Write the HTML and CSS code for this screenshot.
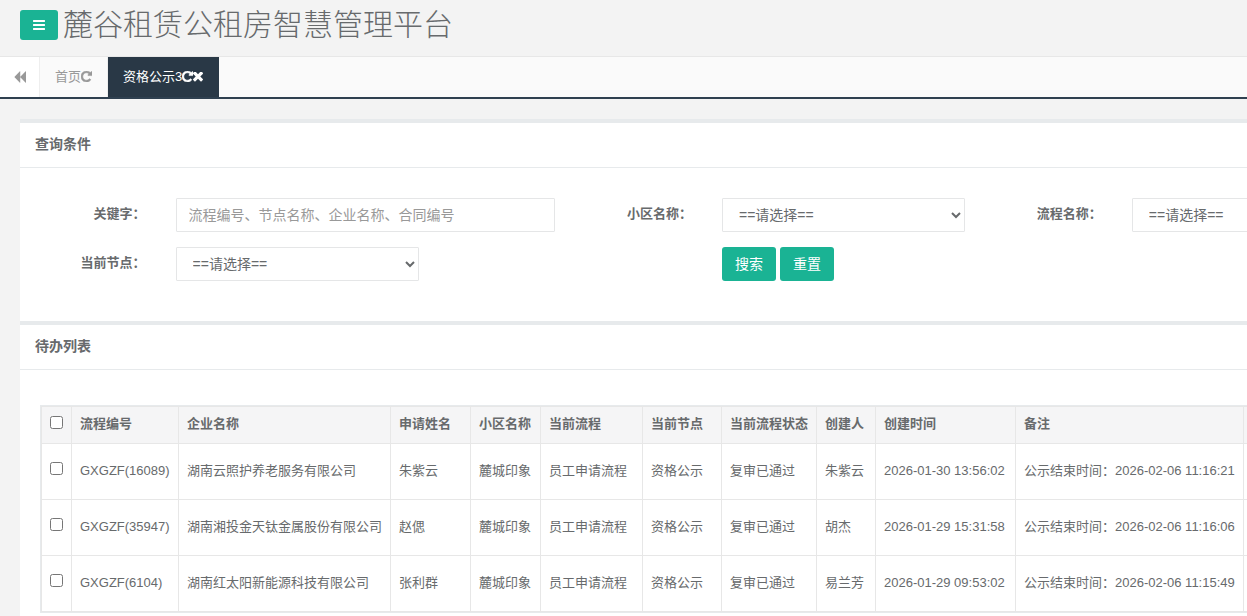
FILE: index.html
```html
<!DOCTYPE html>
<html lang="zh-CN">
	<head>
		<meta charset="utf-8">
		<title>麓谷租赁公租房智慧管理平台</title>
		<link rel="stylesheet" href="styles.css">
	</head>
	<body>
		<header class="navbar">
			<button type="button" class="btn menu-toggle" aria-label="菜单">
				<svg class="icon-bars" viewBox="128 128 1536 1536"><path d="M1664 1344v128q0 26-19 45t-45 19h-1408q-26 0-45-19t-19-45v-128q0-26 19-45t45-19h1408q26 0 45 19t19 45zm0-512v128q0 26-19 45t-45 19h-1408q-26 0-45-19t-19-45v-128q0-26 19-45t45-19h1408q26 0 45 19t19 45zm0-512v128q0 26-19 45t-45 19h-1408q-26 0-45-19t-19-45v-128q0-26 19-45t45-19h1408q26 0 45 19t19 45z"/></svg>
			</button>
			<h1>麓谷租赁公租房智慧管理平台</h1>
		</header>

		<nav class="tabs">
			<button type="button" class="tab-roll" aria-label="向左">
				<svg class="icon-backward" viewBox="128 128 1600 1536"><path d="M1683 141q19-19 32-13t13 32v1472q0 26-13 32t-32-13l-710-710q-9-9-13-19v710q0 26-13 32t-32-13l-710-710q-19-19-19-45t19-45l710-710q19-19 32-13t13 32v710q4-10 13-19z"/></svg>
			</button>
			<a class="tab" href="#home">首页<svg class="icon-repeat" viewBox="128 128 1536 1536"><path d="M1664 256v448q0 26-19 45t-45 19h-448q-42 0-59-40-17-39 14-69l138-138q-148-137-349-137-104 0-198.5 40.5t-163.5 109.5-109.5 163.5-40.5 198.5 40.5 198.5 109.5 163.5 163.5 109.5 198.5 40.5q119 0 225-52t179-147q7-10 23-12 15 0 25 9l137 138q9 8 9.5 20.5t-7.5 22.5q-109 132-264 204.5t-327 72.5q-156 0-298-61t-245-164-164-245-61-298 61-298 164-245 245-164 298-61q147 0 284.5 55.5t244.5 156.5l130-129q29-31 70-14 39 17 39 59z"/></svg></a>
			<a class="tab active" href="#notice">资格公示3<svg class="icon-repeat" viewBox="128 128 1536 1536"><path d="M1664 256v448q0 26-19 45t-45 19h-448q-42 0-59-40-17-39 14-69l138-138q-148-137-349-137-104 0-198.5 40.5t-163.5 109.5-109.5 163.5-40.5 198.5 40.5 198.5 109.5 163.5 163.5 109.5 198.5 40.5q119 0 225-52t179-147q7-10 23-12 15 0 25 9l137 138q9 8 9.5 20.5t-7.5 22.5q-109 132-264 204.5t-327 72.5q-156 0-298-61t-245-164-164-245-61-298 61-298 164-245 245-164 298-61q147 0 284.5 55.5t244.5 156.5l130-129q29-31 70-14 39 17 39 59z"/></svg><svg class="icon-times" viewBox="302 434 1188 1188"><path d="M1490 1322q0 40-28 68l-136 136q-28 28-68 28t-68-28l-294-294-294 294q-28 28-68 28t-68-28l-136-136q-28-28-28-68t28-68l294-294-294-294q-28-28-28-68t28-68l136-136q28-28 68-28t68 28l294 294 294-294q28-28 68-28t68 28l136 136q28 28 28 68t-28 68l-294 294 294 294q28 28 28 68z"/></svg></a>
		</nav>

		<main class="content">
			<section class="ibox">
				<h2 class="ibox-title">查询条件</h2>
				<div class="ibox-search">
					<form class="search-form">
						<label class="col-1" for="keyword">关键字：</label>
						<div class="col-3"><input class="form-control" type="text" id="keyword" placeholder="流程编号、节点名称、企业名称、合同编号"></div>
						<label class="col-1" for="community">小区名称：</label>
						<div class="col-2">
							<select class="form-control" id="community"><option>==请选择==</option></select>
						</div>
						<label class="col-1" for="process">流程名称：</label>
						<div class="col-2">
							<select class="form-control" id="process"><option>==请选择==</option></select>
						</div>
						<label class="col-1" for="node">当前节点：</label>
						<div class="col-2">
							<select class="form-control" id="node"><option>==请选择==</option></select>
						</div>
						<div class="col-buttons">
							<button type="button" class="btn">搜索</button>
							<button type="reset" class="btn">重置</button>
						</div>
					</form>
				</div>
			</section>

			<section class="ibox ibox-list">
				<h2 class="ibox-title">待办列表</h2>
				<div class="ibox-table">
					<div class="table-container">
						<table>
							<colgroup>
								<col class="w-check"><col class="w-number"><col class="w-company"><col class="w-applicant"><col class="w-community"><col class="w-process"><col class="w-node"><col class="w-state"><col class="w-creator"><col class="w-time"><col class="w-remark"><col>
							</colgroup>
							<thead>
								<tr>
									<th><input type="checkbox" aria-label="全选"></th>
									<th>流程编号</th>
									<th>企业名称</th>
									<th>申请姓名</th>
									<th>小区名称</th>
									<th>当前流程</th>
									<th>当前节点</th>
									<th>当前流程状态</th>
									<th>创建人</th>
									<th>创建时间</th>
									<th>备注</th>
									<th></th>
								</tr>
							</thead>
							<tbody>
								<tr>
									<td><input type="checkbox" aria-label="GXGZF(16089)"></td>
									<td>GXGZF(16089)</td>
									<td>湖南云照护养老服务有限公司</td>
									<td>朱紫云</td>
									<td>麓城印象</td>
									<td>员工申请流程</td>
									<td>资格公示</td>
									<td>复审已通过</td>
									<td>朱紫云</td>
									<td>2026-01-30 13:56:02</td>
									<td>公示结束时间：2026-02-06 11:16:21</td>
									<td></td>
								</tr>
								<tr>
									<td><input type="checkbox" aria-label="GXGZF(35947)"></td>
									<td>GXGZF(35947)</td>
									<td>湖南湘投金天钛金属股份有限公司</td>
									<td>赵偲</td>
									<td>麓城印象</td>
									<td>员工申请流程</td>
									<td>资格公示</td>
									<td>复审已通过</td>
									<td>胡杰</td>
									<td>2026-01-29 15:31:58</td>
									<td>公示结束时间：2026-02-06 11:16:06</td>
									<td></td>
								</tr>
								<tr>
									<td><input type="checkbox" aria-label="GXGZF(6104)"></td>
									<td>GXGZF(6104)</td>
									<td>湖南红太阳新能源科技有限公司</td>
									<td>张利群</td>
									<td>麓城印象</td>
									<td>员工申请流程</td>
									<td>资格公示</td>
									<td>复审已通过</td>
									<td>易兰芳</td>
									<td>2026-01-29 09:53:02</td>
									<td>公示结束时间：2026-02-06 11:15:49</td>
									<td></td>
								</tr>
							</tbody>
						</table>
					</div>
				</div>
			</section>
		</main>
	</body>
</html>
```
FILE: styles.css
```css
* {
	box-sizing: border-box;
	margin: 0; padding: 0;
}

body {
	display: flex;
	flex-direction: column;
	height: 100vh;
	overflow: hidden;
	font-family: "Liberation Sans", "Noto Sans CJK SC", sans-serif;
	font-size: 13px;
	line-height: 18px;
	color: #676a6c;
	background: #f3f3f3;
}

button, input, select {
	font-family: inherit;
}

svg {
	fill: currentColor;
	flex: none;
}

/* header */

.navbar {
	display: flex;
	align-items: center;
	gap: 5px;
	height: 56px;
	padding: 0 20px 6px;
}

.navbar h1 {
	font-size: 30px;
	font-weight: 300;
	line-height: 40px;
	white-space: nowrap;
}

.btn {
	padding: 0 13px 2px;
	height: 34px;
	border: 0;
	border-radius: 3px;
	font-size: 14px;
	color: #fff;
	background: #1ab394;
	cursor: pointer;
}

.menu-toggle {
	display: flex;
	align-items: center;
	height: 30px;
	padding-bottom: 0;
}

.icon-bars {
	width: 12px; height: 12px;
}

/* tabs */

.tabs {
	display: flex;
	height: 43px;
	border-top: 1px solid #e7e7e7;
	border-bottom: 2px solid #2f4050;
	background: #fafafa;
}

.tab-roll {
	display: flex;
	align-items: center;
	justify-content: center;
	width: 40px;
	border: 0;
	border-right: 1px solid #eee;
	color: #999;
	background: #fff;
}

.tab {
	display: flex;
	align-items: center;
	padding: 0 15px 1px;
	border-right: 1px solid #eee;
	color: #999;
	text-decoration: none;
}

.tab.active {
	border-right-color: #293846;
	color: #fff;
	background: #293846;
}

.icon-backward {
	width: 12px; height: 12px;
}

.icon-repeat {
	width: 11px; height: 11px;
	stroke: currentColor;
	stroke-width: 80;
}

.icon-times {
	width: 10px; height: 10px;
}

/* panels */

.content {
	display: flex;
	flex-direction: column;
	flex: 1;
	min-height: 0;
	padding: 20px 0 0 20px;
}

.ibox {
	border-top: 4px solid #e7eaec;
	background: #fff;
	overflow: hidden;
	flex: none;
}

.ibox-list {
	flex: 1 0 auto;
}

.ibox-title {
	height: 45px;
	padding: 0 15px;
	border-bottom: 1px solid #e7eaec;
	font-size: 14px;
	line-height: 42px;
}

/* search form, the third field runs past the window edge */

.ibox-search {
	padding: 30px 0 40px 4px;
}

.search-form {
	display: grid;
	grid-template-columns: repeat(10, minmax(0, 1fr));
	row-gap: 15px;
	width: calc(100% + 143px);
}

.search-form > * {
	padding: 0 15px;
}

.search-form label {
	padding-top: 7px;
	font-weight: bold;
	text-align: right;
}

.col-1 { grid-column: span 1; }
.col-2 { grid-column: span 2; }
.col-3 { grid-column: span 3; }

.col-buttons {
	grid-column: 6 / span 2;
	display: flex;
	gap: 4px;
}

.form-control {
	display: block;
	width: 100%;
	height: 34px;
	padding: 6px 12px;
	border: 1px solid #e5e6e7;
	border-radius: 1px;
	font-size: 14px;
	color: #676a6c;
	background: #fff;
}

.form-control::placeholder {
	color: #999;
}

/* list */

.ibox-table {
	padding: 35px 0 0 20px;
}

.table-container {
	width: calc(100% + 144px);
	border: 1px solid #e7eaec;
}

table {
	width: 100%;
	table-layout: fixed;
	border-collapse: collapse;
}

th, td {
	height: 56px;
	padding: 0 8px 2px;
	border: 1px solid #e7e7e7;
	text-align: left;
	vertical-align: middle;
	white-space: nowrap;
}

th {
	height: 37px;
	background: #f5f5f6;
}

td input, th input {
	display: block;
	width: 13px; height: 13px;
	margin-bottom: 4px;
}

.w-check { width: 30px; }
.w-number { width: 107px; }
.w-company { width: 212px; }
.w-applicant { width: 80px; }
.w-community { width: 70px; }
.w-process { width: 102px; }
.w-node { width: 79px; }
.w-state { width: 95px; }
.w-creator { width: 59px; }
.w-time { width: 140px; }
.w-remark { width: 228px; }
```
